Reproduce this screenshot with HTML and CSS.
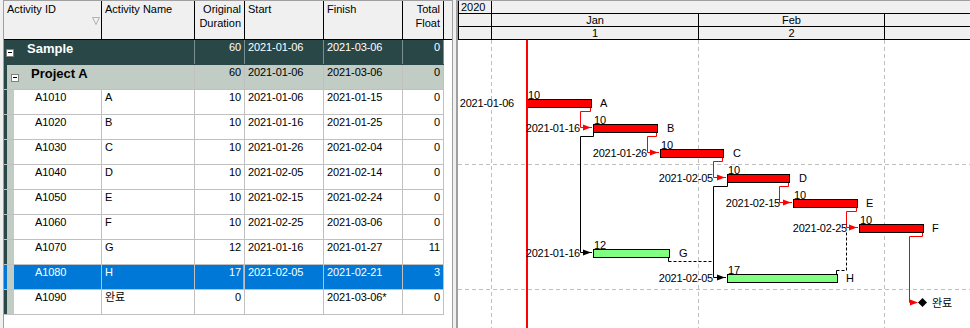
FILE: index.html
```html
<!DOCTYPE html>
<html lang="en">
<head>
    <meta charset="UTF-8">
    <title>Schedule - Gantt</title>
    <link rel="stylesheet" href="styles.css">
</head>
<body>
    <div class="app">
        <div class="table-pane">
            <div class="thead">
                <div class="th">Activity ID
                    <svg class="sort-icon" width="8" height="8" viewBox="0 0 8 8"><path d="M0.5 0.5 H7.5 L4 7.5 Z"/></svg>
                </div>
                <div class="th">Activity Name</div>
                <div class="th num">Original<br>Duration</div>
                <div class="th">Start</div>
                <div class="th">Finish</div>
                <div class="th num">Total<br>Float</div>
            </div>

            <div class="row wbs wbs-1">
                <div class="cell wbs-name"><span class="toggle"></span><span class="wbs-title">Sample</span></div>
                <div class="cell num">60</div>
                <div class="cell">2021-01-06</div>
                <div class="cell">2021-03-06</div>
                <div class="cell num">0</div>
            </div>
            <div class="row wbs wbs-2">
                <div class="cell wbs-name"><span class="toggle"></span><span class="wbs-title">Project A</span></div>
                <div class="cell num">60</div>
                <div class="cell">2021-01-06</div>
                <div class="cell">2021-03-06</div>
                <div class="cell num">0</div>
            </div>

            <div class="row">
                <div class="cell act-id">A1010</div>
                <div class="cell">A</div>
                <div class="cell num">10</div>
                <div class="cell">2021-01-06</div>
                <div class="cell">2021-01-15</div>
                <div class="cell num">0</div>
            </div>
            <div class="row">
                <div class="cell act-id">A1020</div>
                <div class="cell">B</div>
                <div class="cell num">10</div>
                <div class="cell">2021-01-16</div>
                <div class="cell">2021-01-25</div>
                <div class="cell num">0</div>
            </div>
            <div class="row">
                <div class="cell act-id">A1030</div>
                <div class="cell">C</div>
                <div class="cell num">10</div>
                <div class="cell">2021-01-26</div>
                <div class="cell">2021-02-04</div>
                <div class="cell num">0</div>
            </div>
            <div class="row">
                <div class="cell act-id">A1040</div>
                <div class="cell">D</div>
                <div class="cell num">10</div>
                <div class="cell">2021-02-05</div>
                <div class="cell">2021-02-14</div>
                <div class="cell num">0</div>
            </div>
            <div class="row">
                <div class="cell act-id">A1050</div>
                <div class="cell">E</div>
                <div class="cell num">10</div>
                <div class="cell">2021-02-15</div>
                <div class="cell">2021-02-24</div>
                <div class="cell num">0</div>
            </div>
            <div class="row">
                <div class="cell act-id">A1060</div>
                <div class="cell">F</div>
                <div class="cell num">10</div>
                <div class="cell">2021-02-25</div>
                <div class="cell">2021-03-06</div>
                <div class="cell num">0</div>
            </div>
            <div class="row">
                <div class="cell act-id">A1070</div>
                <div class="cell">G</div>
                <div class="cell num">12</div>
                <div class="cell">2021-01-16</div>
                <div class="cell">2021-01-27</div>
                <div class="cell num">11</div>
            </div>
            <div class="row selected">
                <div class="cell act-id">A1080</div>
                <div class="cell">H</div>
                <div class="cell num focused">17</div>
                <div class="cell">2021-02-05</div>
                <div class="cell">2021-02-21</div>
                <div class="cell num">3</div>
            </div>
            <div class="row">
                <div class="cell act-id">A1090</div>
                <div class="cell">완료</div>
                <div class="cell num">0</div>
                <div class="cell"></div>
                <div class="cell">2021-03-06*</div>
                <div class="cell num">0</div>
            </div>
        </div>

        <div class="splitter"></div>

        <div class="gantt">
            <div class="ghead">
                <div class="grow">
                    <div class="gcell first year">2020</div>
                    <div class="gcell rest"></div>
                </div>
                <div class="grow">
                    <div class="gcell first"></div>
                    <div class="gcell jan">Jan</div>
                    <div class="gcell feb">Feb</div>
                    <div class="gcell rest"></div>
                </div>
                <div class="grow">
                    <div class="gcell first"></div>
                    <div class="gcell jan">1</div>
                    <div class="gcell feb">2</div>
                    <div class="gcell rest"></div>
                </div>
            </div>

            <svg class="chart" width="512" height="288" viewBox="458 40 512 288">
                <g class="grid">
                    <line x1="491.5" y1="40" x2="491.5" y2="328"/>
                    <line x1="698.5" y1="40" x2="698.5" y2="328"/>
                    <line x1="884.5" y1="40" x2="884.5" y2="328"/>
                    <line x1="458" y1="164.5" x2="970" y2="164.5"/>
                    <line x1="458" y1="289.5" x2="970" y2="289.5"/>
                </g>

                <!-- relationships -->
                <g class="link critical">
                    <path d="M590.5 108 V111.5 H580.5 V127.5 H592"/>
                    <path d="M656.5 133 V136.5 H647.5 V152.5 H659"/>
                    <path d="M722.5 158 V161.5 H713.5 V177.5 H726"/>
                    <path d="M788.5 183 V186.5 H779.5 V202.5 H792"/>
                    <path d="M856.5 208 V211.5 H846.5 V227.5 H858"/>
                    <path d="M922.5 233 V236.5 H909.5 V302.5 H917"/>
                </g>
                <g class="link normal">
                    <path d="M593.5 133 V136.5 H580.5 V252.5 H592"/>
                    <path d="M727.5 183 V186.5 H713.5 V277.5 H726"/>
                    <path d="M668.5 258 V261.5"/>
                    <path d="M836.5 274 V270.5"/>
                </g>
                <g class="link normal dashed">
                    <path d="M668.5 261.5 H713.5"/>
                    <path d="M836.5 270.5 H846.5 V232"/>
                </g>
                <g class="arrow critical">
                    <polygon points="583,124.5 591,127.5 583,130.5"/>
                    <polygon points="650,149.5 658,152.5 650,155.5"/>
                    <polygon points="717,174.5 725,177.5 717,180.5"/>
                    <polygon points="783,199.5 791,202.5 783,205.5"/>
                    <polygon points="849,224.5 857,227.5 849,230.5"/>
                    <polygon points="910,299.5 918,302.5 910,305.5"/>
                </g>
                <g class="arrow normal">
                    <polygon points="583,249.5 591,252.5 583,255.5"/>
                    <polygon points="717,274.5 725,277.5 717,280.5"/>
                </g>

                <!-- bars -->
                <g class="bar critical">
                    <rect x="527.5" y="99.5" width="64" height="8"/>
                    <rect x="593.5" y="124.5" width="64" height="8"/>
                    <rect x="660.5" y="149.5" width="63" height="8"/>
                    <rect x="727.5" y="174.5" width="62" height="8"/>
                    <rect x="793.5" y="199.5" width="64" height="8"/>
                    <rect x="859.5" y="224.5" width="64" height="8"/>
                </g>
                <g class="bar normal">
                    <rect x="593.5" y="249.5" width="76" height="8"/>
                    <rect x="727.5" y="274.5" width="110" height="8"/>
                </g>
                <polygon class="milestone" points="918,302.5 922.5,298 927,302.5 922.5,307"/>

                <rect class="data-date" x="526" y="40" width="2" height="288"/>

                <!-- labels -->
                <g class="date-lbl">
                    <text x="514" y="107">2021-01-06</text>
                    <text x="580" y="132">2021-01-16</text>
                    <text x="647" y="157">2021-01-26</text>
                    <text x="713" y="182">2021-02-05</text>
                    <text x="780" y="207">2021-02-15</text>
                    <text x="847" y="232">2021-02-25</text>
                    <text x="580" y="257">2021-01-16</text>
                    <text x="713" y="282">2021-02-05</text>
                </g>
                <g class="dur-lbl">
                    <text x="528" y="99">10</text>
                    <text x="594" y="124">10</text>
                    <text x="661" y="149">10</text>
                    <text x="728" y="174">10</text>
                    <text x="794" y="199">10</text>
                    <text x="860" y="224">10</text>
                    <text x="594" y="249">12</text>
                    <text x="728" y="274">17</text>
                </g>
                <g class="name-lbl">
                    <text x="600" y="107">A</text>
                    <text x="667" y="132">B</text>
                    <text x="733" y="157">C</text>
                    <text x="799" y="182">D</text>
                    <text x="866" y="207">E</text>
                    <text x="932" y="232">F</text>
                    <text x="679" y="257">G</text>
                    <text x="846" y="282">H</text>
                    <text x="932" y="307">완료</text>
                </g>
            </svg>
        </div>
    </div>
</body>
</html>
```

FILE: styles.css
```css
* {
    box-sizing: border-box;
}

body {
    margin: 0;
    width: 970px;
    height: 328px;
    overflow: hidden;
    background-color: #f0f0f0;
    font: 11px/13px "Liberation Sans", "Noto Sans CJK KR", sans-serif;
    color: #000;
}

.app {
    display: flex;
    height: 328px;
}

/* activity table */

.table-pane {
    width: 449px;
    margin-left: 3px;
    border-left: 1px solid #a0a0a0;
    background-color: #fff;
}

.thead,
.row {
    display: grid;
    grid-template-columns: 98px 93px 50px 79px 79px 41px;
}

.thead {
    height: 40px;
    background-color: #f0f0f0;
    border-top: 1px solid #a0a0a0;
    border-bottom: 1px solid #000;
}

.th {
    position: relative;
    padding: 1px 3px 0;
    line-height: 14px;
    border-right: 1px solid #000;
}

.sort-icon {
    position: absolute;
    left: 88px;
    top: 16px;
}

.sort-icon path {
    fill: none;
    stroke: #b0b0b0;
    stroke-width: 1;
}

.row {
    width: 440px;
    height: 25px;
    border-bottom: 1px solid #c0c0c0;
}

.cell {
    padding: 1px 3px 0;
    border-right: 1px solid #c0c0c0;
    white-space: nowrap;
    overflow: hidden;
    letter-spacing: -0.1px;
}

.num {
    text-align: right;
}

.act-id {
    padding-left: 31px;
    background: linear-gradient(90deg, #294747 0 3px, #c0ccc4 3px 10px, transparent 10px);
}

.wbs-name {
    grid-column: span 2;
    display: flex;
    align-items: flex-start;
}

.wbs-title {
    font-size: 13px;
    line-height: 15px;
    font-weight: bold;
    letter-spacing: 0;
}

.toggle {
    position: relative;
    width: 8px;
    height: 8px;
    margin-top: 8px;
    background-color: #fff;
    border: 1px solid #808080;
}

.toggle::after {
    content: "";
    position: absolute;
    left: 1px;
    top: 2px;
    width: 4px;
    height: 1px;
    background-color: #000;
}

.wbs-1 {
    background-color: #294747;
    color: #fff;
    border-bottom-color: #294747;
}

.wbs-1 .cell {
    border-right-color: #7a8f8f;
}

.wbs-1 .wbs-name {
    padding-left: 2px;
}

.wbs-1 .toggle {
    margin-right: 13px;
}

.wbs-2 {
    background: linear-gradient(90deg, #294747 0 3px, #c0ccc4 3px);
}

.wbs-2 .wbs-name {
    padding-left: 7px;
}

.wbs-2 .toggle {
    margin-right: 12px;
}

.selected {
    background-color: #0078d7;
    color: #fff;
}

.selected .act-id {
    background: linear-gradient(90deg, #0078d7 0 3px, #c0ccc4 3px 10px, transparent 10px);
}

.focused {
    position: relative;
}

.focused::after {
    content: "";
    position: absolute;
    left: -1px;
    top: -1px;
    right: 0;
    bottom: -1px;
    border: 1px solid #f29b47;
}

.splitter {
    width: 4px;
    border-left: 1px solid #a0a0a0;
    background-color: #f0f0f0;
}

/* gantt chart */

.gantt {
    width: 514px;
    border-left: 2px solid #a0a0a0;
    background-color: #fff;
}

.ghead {
    background-color: #f0f0f0;
    border-top: 1px solid #a0a0a0;
}

.grow {
    display: flex;
    height: 13px;
    border-bottom: 1px solid #000;
}

.gcell {
    line-height: 12px;
    text-align: center;
    border-right: 1px solid #000;
}

.gcell.first {
    width: 34px;
    border-left: 1px solid #000;
}

.gcell.year {
    text-align: left;
    padding-left: 2px;
}

.gcell.jan {
    width: 207px;
}

.gcell.feb {
    width: 186px;
}

.gcell.rest {
    flex: 1;
    border-right: none;
}

.chart {
    display: block;
}

.chart text {
    font-family: "Liberation Sans", "Noto Sans CJK KR", sans-serif;
    font-size: 11px;
    fill: #000;
}

.grid line {
    stroke: #c0c0c0;
    stroke-width: 1;
    stroke-dasharray: 4 3;
}

.link path {
    fill: none;
    stroke-width: 1;
}

.link.critical path {
    stroke: #ff0000;
}

.link.normal path {
    stroke: #000;
}

.link.dashed path {
    stroke-dasharray: 3 2;
}

.arrow.critical polygon {
    fill: #ff0000;
}

.arrow.normal polygon {
    fill: #000;
}

.bar rect {
    stroke: #000;
    stroke-width: 1;
}

.bar.critical rect {
    fill: #ff0000;
}

.bar.normal rect {
    fill: #80ff80;
}

.milestone {
    fill: #000;
}

.data-date {
    fill: #ff0000;
}

.date-lbl text {
    text-anchor: end;
    letter-spacing: -0.2px;
}
```
